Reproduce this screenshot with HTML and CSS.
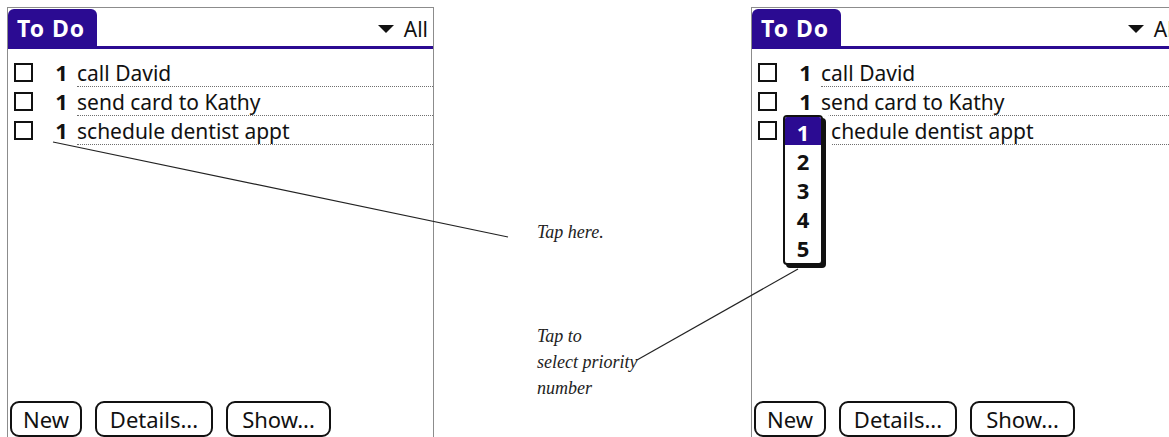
FILE: index.html
```html
<!DOCTYPE html>
<html lang="en">
<head>
<meta charset="utf-8">
<title>To Do priority</title>
<link rel="stylesheet" href="styles.css">
</head>
<body>
<div class="page">
  <section class="screen screen-left">
    <header class="titlebar">
      <div class="tab">To Do</div>
      <div class="cat"><svg class="tri" viewBox="0 0 16 8" width="16" height="8"><path d="M0 0H16L8 8Z"/></svg><span>All</span></div>
    </header>
    <ul class="list">
      <li class="row"><span class="box"></span><span class="pri">1</span><span class="txt">call David</span></li>
      <li class="row"><span class="box"></span><span class="pri">1</span><span class="txt">send card to Kathy</span></li>
      <li class="row"><span class="box"></span><span class="pri">1</span><span class="txt">schedule dentist appt</span></li>
    </ul>
    <div class="buttons">
      <button class="btn btn-new">New</button>
      <button class="btn btn-details">Details...</button>
      <button class="btn btn-show">Show...</button>
    </div>
  </section>

  <div class="notes">
    <p class="note note-tap">Tap here.</p>
    <p class="note note-select">Tap to<br>select priority<br>number</p>
  </div>

  <section class="screen screen-right">
    <header class="titlebar">
      <div class="tab">To Do</div>
      <div class="cat"><svg class="tri" viewBox="0 0 16 8" width="16" height="8"><path d="M0 0H16L8 8Z"/></svg><span>All</span></div>
    </header>
    <ul class="list">
      <li class="row"><span class="box"></span><span class="pri">1</span><span class="txt">call David</span></li>
      <li class="row"><span class="box"></span><span class="pri">1</span><span class="txt">send card to Kathy</span></li>
      <li class="row"><span class="box"></span><span class="pri pri-covered">1</span><span class="txt">schedule dentist appt</span></li>
    </ul>
    <ol class="popup">
      <li class="pop-item sel">1</li>
      <li class="pop-item">2</li>
      <li class="pop-item">3</li>
      <li class="pop-item">4</li>
      <li class="pop-item">5</li>
    </ol>
    <div class="buttons">
      <button class="btn btn-new">New</button>
      <button class="btn btn-details">Details...</button>
      <button class="btn btn-show">Show...</button>
    </div>
  </section>

  <svg class="leaders" width="1169" height="437" viewBox="0 0 1169 437">
    <line x1="53" y1="142" x2="508" y2="237"/>
    <line x1="637" y1="360" x2="798" y2="269"/>
  </svg>
</div>
</body>
</html>
```

FILE: styles.css
```css
* { box-sizing: border-box; }

body {
  margin: 0;
  background: #fff;
  font-family: "Noto Sans", "DejaVu Sans", sans-serif;
  color: #111;
}

.page {
  position: relative;
  display: flex;
  width: 1169px;
  height: 437px;
  overflow: hidden;
}

.screen {
  position: relative;
  flex: none;
  display: flex;
  flex-direction: column;
  height: 431px;
  margin-top: 7px;
  border: 1px solid #8c8c8c;
  border-bottom: none;
}

.screen-left {
  margin-left: 7px;
  width: 427px;
}

.screen-right {
  width: 433px;
}

.titlebar {
  display: flex;
  align-items: flex-end;
  height: 41px;
  border-bottom: 3px solid #2b0b92;
}

.tab {
  width: 89px;
  height: 37px;
  padding: 1px 0 0 9px;
  background: #2b0b92;
  border-radius: 6px 6px 0 0;
  color: #fff;
  font-weight: 700;
  font-size: 23px;
  line-height: 36px;
  letter-spacing: 1px;
}

.cat {
  margin-left: auto;
  display: flex;
  align-items: center;
  gap: 10px;
  height: 37px;
  padding: 2px 5px 0 0;
  font-size: 21px;
}

.tri { fill: #111; }

.list {
  list-style: none;
  margin: 9px 0 0;
  padding: 0;
}

.row {
  display: flex;
  align-items: stretch;
  height: 29px;
}

.box {
  align-self: center;
  width: 19px;
  height: 19px;
  margin-left: 6px;
  border: 2px solid #111;
}

.pri {
  width: 27px;
  margin-left: 15px;
  font-weight: 700;
  font-size: 22px;
  line-height: 29px;
  text-align: center;
}

.pri-covered { visibility: hidden; }

.txt {
  flex: 1;
  margin-left: 2px;
  font-size: 21px;
  line-height: 28px;
  padding-top: 1px;
  border-bottom: 1px dotted #6f6f6f;
  white-space: nowrap;
}

.buttons {
  display: flex;
  gap: 13px;
  margin-top: auto;
  margin-bottom: 1px;
  padding-left: 2px;
}

.btn {
  height: 36px;
  padding: 0;
  border: 2px solid #111;
  border-radius: 9px;
  background: #fff;
  font-family: "Noto Sans", "DejaVu Sans", sans-serif;
  font-size: 22px;
  line-height: 31px;
  color: #111;
}

.btn-new { width: 72px; }
.btn-details { width: 118px; }
.btn-show { width: 105px; }

.notes {
  flex: none;
  width: 317px;
  padding-left: 103px;
  font-family: "Liberation Serif", "DejaVu Serif", serif;
  font-style: italic;
  font-size: 18px;
  color: #222;
}

.note { margin: 0; }

.note-tap {
  margin-top: 219px;
  line-height: 26px;
}

.note-select {
  margin-top: 78px;
  line-height: 26px;
}

.popup {
  position: absolute;
  left: 31px;
  top: 107px;
  width: 40px;
  height: 150px;
  margin: 0;
  padding: 0;
  list-style: none;
  background: #fff;
  border: 2px solid #111;
  border-radius: 4px;
  box-shadow: 3px 3px 0 #111, 8px 0 0 #fff;
  overflow: hidden;
}

.pop-item {
  height: 29px;
  font-weight: 700;
  font-size: 22px;
  line-height: 32px;
  text-align: center;
}

.pop-item.sel {
  height: 28px;
  background: #2b0b92;
  color: #fff;
  line-height: 30px;
}

.leaders {
  position: absolute;
  left: 0;
  top: 0;
  pointer-events: none;
}

.leaders line {
  stroke: #222;
  stroke-width: 1.2;
}
```
